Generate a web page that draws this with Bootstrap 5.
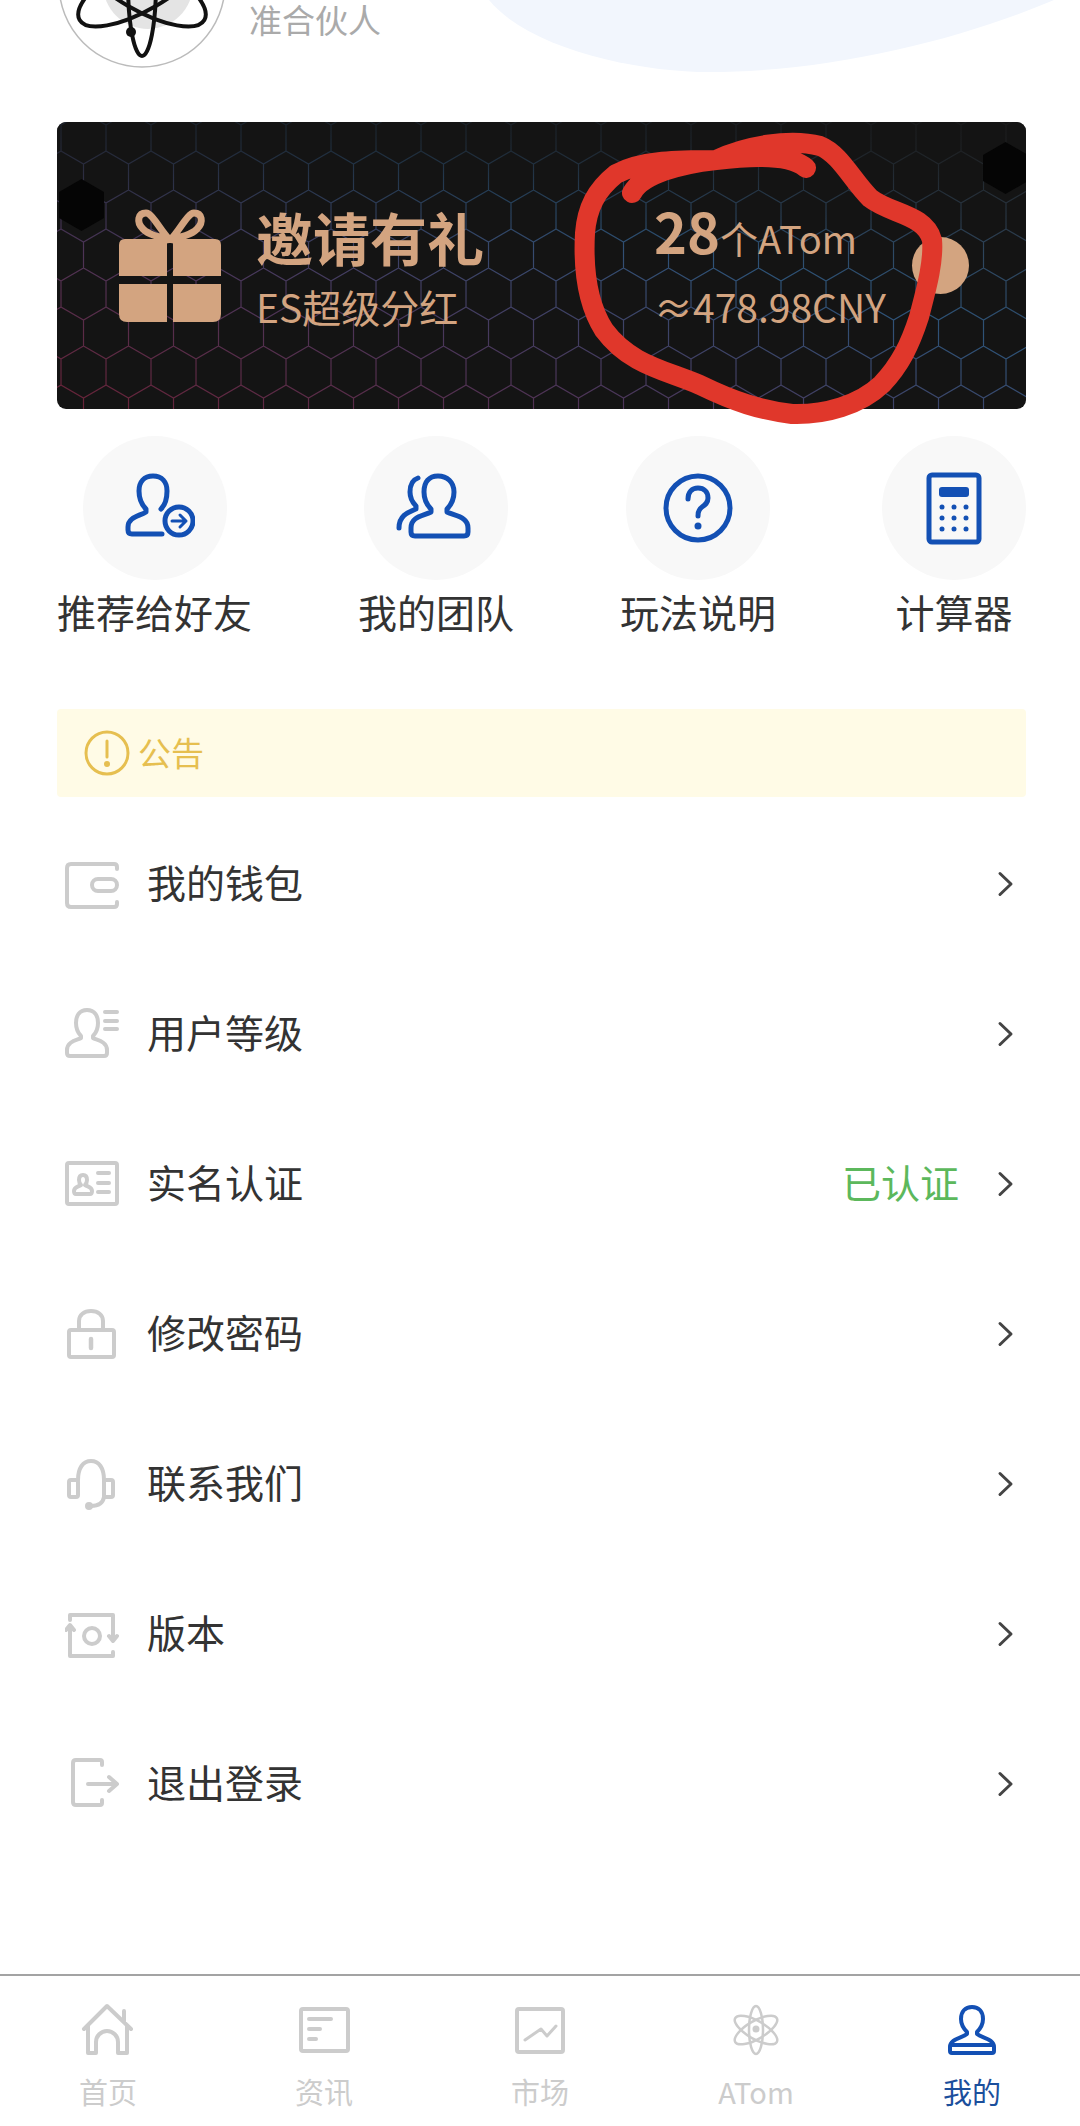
<!DOCTYPE html>
<html lang="zh-CN">
<head>
  <meta charset="UTF-8" />
  <meta name="viewport" content="width=device-width, initial-scale=1" />
  <title>我的</title>
  <link href="https://cdn.jsdelivr.net/npm/bootstrap@5.3.3/dist/css/bootstrap.min.css" rel="stylesheet" />
  <style>
  html, body { height: 100%; }
  body {
    font-family: "Noto Sans CJK SC", "Noto Sans", sans-serif;
    color: #333;
    background: #fff;
    overflow: hidden;
  }
  .page { height: 2126px; }

  /* top of the profile, scrolled partly off screen */
  .profile-top { height: 122px; padding: 0 58px; overflow: hidden; }
  .blob { left: 0; top: 0; }
  .avatar-wrap { width: 168px; height: 168px; margin-top: -100px; flex: none; }
  .rank-text { font-size: 33px; line-height: 38px; color: #aaa; margin-left: 23px; }

  /* invite banner */
  .invite-banner {
    height: 287px;
    margin: 0 54px 0 57px;
    border-radius: 9px;
    background: #141414;
    color: #d3a480;
    overflow: hidden;
  }
  .hex-bg { inset: 0; }
  .gift-icon { margin-left: 62px; flex: none; }
  .invite-left { margin-left: 35px; width: 398px; flex: none; }
  .invite-title { font-size: 57px; line-height: 70px; font-weight: 700; }
  .invite-sub { font-size: 39px; line-height: 50px; margin-top: 10px; }
  .invite-num { line-height: 72px; margin-top: -6px; white-space: nowrap; }
  .invite-num b { font-size: 56px; }
  .invite-num span { font-size: 38px; }
  .invite-cny { font-size: 39px; line-height: 50px; margin-top: -2px; white-space: nowrap; }
  .invite-right { width: 258px; flex: none; }
  .go-dot { width: 57px; height: 57px; background: #d3a480; flex: none; }
  .scribble { left: 0; top: 0; z-index: 3; pointer-events: none; }

  /* four round shortcuts */
  .shortcut-row { margin: 27px 54px 0 57px; }
  .shortcut-item { min-width: 144px; }
  .shortcut-circle { width: 144px; height: 144px; background: #f8f8f8; }
  .shortcut-label { font-size: 39px; line-height: 46px; margin-top: 8px; white-space: nowrap; }

  /* notice */
  .notice-bar {
    height: 88px;
    margin: 75px 54px 0 57px;
    padding-left: 27px;
    background: #fffbe6;
    color: #e6bf50;
    font-size: 33px;
    border-radius: 4px;
  }

  /* menu */
  .menu-list { margin-top: 11px; }
  .menu-row {
    height: 150px;
    padding: 0 65px 0 65px;
    border: 0;
    font-size: 39px;
    color: #333;
  }
  .menu-text { margin: -3px 0 0 28px; }
  .menu-state { color: #5cb85c; margin: -3px 36px 0 0; }
  .menu-arrow { margin-top: 2px; }

  /* tab bar */
  .tab-bar { border-top: 2px solid #a3a3a3; height: 152px; }
  .tab-item { width: 216px; color: #ccc; font-size: 29px; line-height: 36px; padding-top: 24px; }
  .tab-item svg { display: block; margin-bottom: 13px; }
  .tab-item.is-on { color: #1b4f9c; }

  .ico-gray { fill: none; stroke: #ccc; stroke-width: 4; stroke-linecap: round; stroke-linejoin: round; }
  .ico-blue { fill: none; stroke: #1350b4; stroke-width: 5; stroke-linecap: round; stroke-linejoin: round; }
  .ico-tab { fill: none; stroke: #ccc; stroke-width: 4; stroke-linecap: round; stroke-linejoin: round; }
  .ico-tab.ico-on { stroke: #1350b4; }
  </style>
</head>
<body>
<div class="page d-flex flex-column position-relative">

  <!-- profile -->
  <div class="profile-top d-flex align-items-start position-relative">
    <svg class="blob position-absolute" width="1080" height="122" viewBox="0 0 1080 122"><path d="M489 0C530 50 640 72 709 72C830 72 960 40 1054 0Z" fill="#f2f6fd"/></svg>
    <div class="avatar-wrap position-relative">
      <svg width="168" height="168" viewBox="0 0 168 168">
        <circle cx="84" cy="84" r="83" fill="#fff" stroke="#bbb" stroke-width="1.5"/>
        <circle cx="90" cy="84" r="45" fill="#e4e4e4"/>
        <g fill="none" stroke="#111" stroke-width="4">
          <ellipse cx="84" cy="84" rx="72" ry="14" transform="rotate(90 84 84)"/>
          <ellipse cx="84" cy="84" rx="72" ry="26" transform="rotate(30 84 84)"/>
          <ellipse cx="84" cy="84" rx="72" ry="26" transform="rotate(-30 84 84)"/>
        </g>
        <circle cx="73" cy="132" r="5" fill="#111"/>
      </svg>
    </div>
    <div class="rank-text position-relative">准合伙人</div>
  </div>

  <!-- banner -->
  <div class="invite-banner position-relative d-flex align-items-center">
    <svg class="hex-bg position-absolute" width="969" height="287" viewBox="0 0 969 287">
      <defs>
        <pattern id="hexCell" width="45" height="78" patternUnits="userSpaceOnUse" x="4" y="-10">
          <path d="M22.5 0L45 13V39L22.5 52L0 39V13ZM22.5 52V78" fill="none" stroke="#fff" stroke-width="1.2"/>
        </pattern>
        <mask id="hexMask"><rect width="969" height="287" fill="url(#hexCell)"/></mask>
        <linearGradient id="hexTint" x1="0" y1="1" x2="1" y2="0">
          <stop offset="0" stop-color="#6a2236"/>
          <stop offset=".3" stop-color="#4c3558"/>
          <stop offset=".6" stop-color="#2e5378"/>
          <stop offset="1" stop-color="#2c2c2c"/>
        </linearGradient>
        <linearGradient id="hexFade" x1="0" y1="0" x2="0" y2="1">
          <stop offset="0" stop-color="#141414" stop-opacity=".75"/>
          <stop offset=".45" stop-color="#141414" stop-opacity="0"/>
        </linearGradient>
      </defs>
      <rect width="969" height="287" fill="url(#hexTint)" mask="url(#hexMask)"/>
      <rect width="969" height="287" fill="url(#hexFade)"/>
      <path d="M22.500 0L45 13V39L22.500 52L0 39V13Z" fill="#050505" transform="translate(2 57)"/>
      <path d="M22.500 0L45 13V39L22.500 52L0 39V13Z" fill="#050505" transform="translate(926 20)"/>
    </svg>
    <svg class="gift-icon position-relative" width="102" height="113" viewBox="0 0 102 113">
      <path d="M50 30C42 22 33 4 27 4C19 4 17 13 24 20C30 26 40 28 50 30ZM52 30C60 22 69 4 75 4C83 4 85 13 78 20C72 26 62 28 52 30Z" fill="none" stroke="#d3a480" stroke-width="7"/>
      <path d="M6 30H48V67H0V36Q0 30 6 30ZM54 30H96Q102 30 102 36V67H54ZM0 75H48V113H8Q0 113 0 105ZM54 75H102V105Q102 113 94 113H54Z" fill="#d3a480"/>
    </svg>
    <div class="invite-left position-relative">
      <div class="invite-title">邀请有礼</div>
      <div class="invite-sub">ES超级分红</div>
    </div>
    <div class="invite-right position-relative">
      <div class="invite-num"><b>28</b><span>个ATom</span></div>
      <div class="invite-cny">≈478.98CNY</div>
    </div>
    <div class="go-dot rounded-circle position-relative"></div>
  </div>

  <!-- hand drawn red ring on top of the banner -->
  <svg class="scribble position-absolute" width="1080" height="440" viewBox="0 0 1080 440">
    <path d="M632 193C642 174 680 164 716 160C750 156 790 154 806 168M716 160C745 146 790 138 820 146C840 154 852 180 870 198C890 214 925 214 932 240C934 262 926 290 919 317C910 345 900 365 882 384C860 405 825 415 792 414C760 410 735 402 700 385C665 370 630 365 604 330C588 305 583 270 585 233C587 208 596 190 616 174C642 160 680 160 716 160" fill="none" stroke="#e0372b" stroke-width="20" stroke-linecap="round" stroke-linejoin="round"/>
  </svg>

  <!-- shortcuts -->
  <div class="shortcut-row d-flex justify-content-between">
    <div class="shortcut-item d-flex flex-column align-items-center">
      <div class="shortcut-circle rounded-circle d-flex align-items-center justify-content-center">
        <svg class="ico-blue" width="80" height="80" viewBox="0 0 80 80">
          <path d="M46 41C50 37 52 31 52 23C52 14 47 8 38 8S24 14 24 23C24 31 27 37 31 41V44C25 48 13 49 13 59V62Q13 66 17 66H47"/>
          <circle cx="64" cy="53" r="14"/>
          <path d="M57 53H71M65 47L71 53L65 59" stroke-width="3"/>
        </svg>
      </div>
      <div class="shortcut-label">推荐给好友</div>
    </div>
    <div class="shortcut-item d-flex flex-column align-items-center">
      <div class="shortcut-circle rounded-circle d-flex align-items-center justify-content-center">
        <svg class="ico-blue" width="80" height="80" viewBox="0 0 80 80">
          <path d="M42 8C33 8 28 14 28 24C28 32 31 37 35 41V44C28 48 15 48 15 60V64Q15 68 19 68H68Q72 68 72 64V60C72 48 58 48 51 44V41C55 37 58 32 58 24C58 14 51 8 42 8Z"/>
          <path d="M22 10C16 12 14 18 14 24C14 31 17 35 20 38V41C13 44 3 47 3 60"/>
        </svg>
      </div>
      <div class="shortcut-label">我的团队</div>
    </div>
    <div class="shortcut-item d-flex flex-column align-items-center">
      <div class="shortcut-circle rounded-circle d-flex align-items-center justify-content-center">
        <svg class="ico-blue" width="80" height="80" viewBox="0 0 80 80">
          <circle cx="40" cy="40" r="32"/>
          <path d="M30 31C30 24 34 20 40 20S50 24 50 30C50 35 47 37 44 39C41 41 40 44 40 48"/>
          <circle cx="40" cy="58" r="3.500" fill="#1350b4" stroke="none"/>
        </svg>
      </div>
      <div class="shortcut-label">玩法说明</div>
    </div>
    <div class="shortcut-item d-flex flex-column align-items-center">
      <div class="shortcut-circle rounded-circle d-flex align-items-center justify-content-center">
        <svg class="ico-blue" width="80" height="80" viewBox="0 0 80 80">
          <rect x="15" y="7" width="50" height="67" rx="3"/>
          <rect x="25" y="19" width="30" height="10" rx="3" fill="#1350b4" stroke="none"/>
          <g fill="#1350b4" stroke="none">
            <circle cx="28" cy="39" r="2.500"/><circle cx="40" cy="39" r="2.500"/><circle cx="52" cy="39" r="2.500"/>
            <circle cx="28" cy="50" r="2.500"/><circle cx="40" cy="50" r="2.500"/><circle cx="52" cy="50" r="2.500"/>
            <circle cx="28" cy="61" r="2.500"/><circle cx="40" cy="61" r="2.500"/><circle cx="52" cy="61" r="2.500"/>
          </g>
        </svg>
      </div>
      <div class="shortcut-label">计算器</div>
    </div>
  </div>

  <!-- notice -->
  <div class="notice-bar d-flex align-items-center">
    <svg class="me-2" width="46" height="46" viewBox="0 0 46 46" fill="none" stroke="#e6bf50" stroke-width="3" stroke-linecap="round">
      <circle cx="23" cy="23" r="21"/>
      <path d="M23 11V27"/>
      <circle cx="23" cy="34" r="1.500" fill="#e6bf50"/>
    </svg>
    <span>公告</span>
  </div>

  <!-- menu -->
  <div class="list-group list-group-flush menu-list">
    <div class="list-group-item menu-row d-flex align-items-center">
      <svg class="ico-gray" width="54" height="54" viewBox="0 0 54 54">
        <path d="M52 13V11Q52 8 49 8H6Q2 8 2 12V47Q2 51 6 51H49Q52 51 52 48V46"/>
        <rect x="27" y="23" width="25" height="12" rx="6"/>
      </svg>
      <span class="menu-text">我的钱包</span>
      <svg class="ms-auto menu-arrow" width="20" height="26" viewBox="0 0 20 26" fill="none" stroke="#444" stroke-width="3" stroke-linecap="round" stroke-linejoin="round"><path d="M5 2.500L16 13L5 23.500"/></svg>
    </div>
    <div class="list-group-item menu-row d-flex align-items-center">
      <svg class="ico-gray" width="54" height="54" viewBox="0 0 54 54">
        <path d="M22 4C14 4 11 10 11 17C11 23 13 27 16 30V32C13 34 2 35 2 44V47Q2 50 5 50H39Q42 50 42 47V44C42 35 31 34 28 32V30C31 27 33 23 33 17C33 10 30 4 22 4Z"/>
        <path d="M40 6H52M40 15H52M40 23H52"/>
      </svg>
      <span class="menu-text">用户等级</span>
      <svg class="ms-auto menu-arrow" width="20" height="26" viewBox="0 0 20 26" fill="none" stroke="#444" stroke-width="3" stroke-linecap="round" stroke-linejoin="round"><path d="M5 2.500L16 13L5 23.500"/></svg>
    </div>
    <div class="list-group-item menu-row d-flex align-items-center">
      <svg class="ico-gray" width="54" height="54" viewBox="0 0 54 54">
        <rect x="2" y="7" width="50" height="41" rx="2"/>
        <path d="M18 19C15 19 14 21 14 24C14 26 15 28 16 29C13 31 9 31 9 35Q9 38 11 38H25Q27 38 27 35C27 31 23 31 20 29C21 28 22 26 22 24C22 21 21 19 18 19Z"/>
        <path d="M33 17H44M33 27H44M33 36H44"/>
      </svg>
      <span class="menu-text">实名认证</span>
      <span class="ms-auto menu-state">已认证</span>
      <svg class="menu-arrow" width="20" height="26" viewBox="0 0 20 26" fill="none" stroke="#444" stroke-width="3" stroke-linecap="round" stroke-linejoin="round"><path d="M5 2.500L16 13L5 23.500"/></svg>
    </div>
    <div class="list-group-item menu-row d-flex align-items-center">
      <svg class="ico-gray" width="54" height="54" viewBox="0 0 54 54">
        <rect x="4" y="24" width="45" height="27" rx="2"/>
        <path d="M14 24V15C14 9 19 5 26 5S38 9 38 15V24"/>
        <path d="M26 33V42" stroke-width="4.500"/>
      </svg>
      <span class="menu-text">修改密码</span>
      <svg class="ms-auto menu-arrow" width="20" height="26" viewBox="0 0 20 26" fill="none" stroke="#444" stroke-width="3" stroke-linecap="round" stroke-linejoin="round"><path d="M5 2.500L16 13L5 23.500"/></svg>
    </div>
    <div class="list-group-item menu-row d-flex align-items-center">
      <svg class="ico-gray" width="54" height="54" viewBox="0 0 54 54">
        <path d="M13 24C13 12 18 5 26 5S39 12 39 24V41"/>
        <rect x="4" y="24" width="9" height="17" rx="2"/>
        <rect x="39" y="24" width="9" height="17" rx="2"/>
        <path d="M39 41C38 47 33 50 26 50"/>
        <circle cx="24" cy="50" r="2" fill="#ccc"/>
      </svg>
      <span class="menu-text">联系我们</span>
      <svg class="ms-auto menu-arrow" width="20" height="26" viewBox="0 0 20 26" fill="none" stroke="#444" stroke-width="3" stroke-linecap="round" stroke-linejoin="round"><path d="M5 2.500L16 13L5 23.500"/></svg>
    </div>
    <div class="list-group-item menu-row d-flex align-items-center">
      <svg class="ico-gray" width="54" height="54" viewBox="0 0 54 54">
        <path d="M5 14V9H48V34M44 30L48 35L52 30"/>
        <path d="M1 24L5 19L9 24M5 20V50H48V46"/>
        <circle cx="27" cy="30" r="8"/>
      </svg>
      <span class="menu-text">版本</span>
      <svg class="ms-auto menu-arrow" width="20" height="26" viewBox="0 0 20 26" fill="none" stroke="#444" stroke-width="3" stroke-linecap="round" stroke-linejoin="round"><path d="M5 2.500L16 13L5 23.500"/></svg>
    </div>
    <div class="list-group-item menu-row d-flex align-items-center">
      <svg class="ico-gray" width="54" height="54" viewBox="0 0 54 54">
        <path d="M37 9V6Q37 4 35 4H11Q8 4 8 7V46Q8 49 11 49H35Q37 49 37 47V44"/>
        <path d="M23 28H51M44 21L52 28L44 35"/>
      </svg>
      <span class="menu-text">退出登录</span>
      <svg class="ms-auto menu-arrow" width="20" height="26" viewBox="0 0 20 26" fill="none" stroke="#444" stroke-width="3" stroke-linecap="round" stroke-linejoin="round"><path d="M5 2.500L16 13L5 23.500"/></svg>
    </div>
  </div>

  <!-- bottom tabs -->
  <nav class="tab-bar d-flex mt-auto">
    <div class="tab-item d-flex flex-column align-items-center">
      <svg class="ico-tab" width="60" height="60" viewBox="0 0 60 60">
        <path d="M6 29L29 6L53 29M46 22V11M10 26V53H18V42A11 11 0 0 1 40 42V53H49V26"/>
      </svg>
      <span>首页</span>
    </div>
    <div class="tab-item d-flex flex-column align-items-center">
      <svg class="ico-tab" width="60" height="60" viewBox="0 0 60 60">
        <rect x="7" y="9" width="47" height="42" rx="2"/>
        <path d="M15 19H37M15 29H26M15 39H22"/>
      </svg>
      <span>资讯</span>
    </div>
    <div class="tab-item d-flex flex-column align-items-center">
      <svg class="ico-tab" width="60" height="60" viewBox="0 0 60 60">
        <rect x="7" y="9" width="46" height="43" rx="2"/>
        <path d="M15 40L31 29L37 36L46 26" stroke-width="3"/>
      </svg>
      <span>市场</span>
    </div>
    <div class="tab-item d-flex flex-column align-items-center">
      <svg class="ico-tab" width="60" height="60" viewBox="0 0 60 60">
        <g stroke-width="2.500">
          <ellipse cx="30" cy="30" rx="24" ry="7" transform="rotate(90 30 30)"/>
          <ellipse cx="30" cy="30" rx="24" ry="9" transform="rotate(30 30 30)"/>
          <ellipse cx="30" cy="30" rx="24" ry="9" transform="rotate(-30 30 30)"/>
        </g>
        <circle cx="30" cy="29" r="1.500" fill="#ccc"/>
      </svg>
      <span>ATom</span>
    </div>
    <div class="tab-item is-on d-flex flex-column align-items-center">
      <svg class="ico-tab ico-on" width="60" height="60" viewBox="0 0 60 60">
        <path d="M30 7C23 7 19 12 19 19C19 25 22 29 25 32V34C20 38 8 39 8 47V51Q8 53 10 53H50Q52 53 52 51V47C52 39 40 38 35 34V32C38 29 41 25 41 19C41 12 37 7 30 7Z"/>
        <path d="M9 45H51"/>
      </svg>
      <span>我的</span>
    </div>
  </nav>
</div>
<script src="https://cdn.jsdelivr.net/npm/bootstrap@5.3.3/dist/js/bootstrap.bundle.min.js"></script>
</body>
</html>
